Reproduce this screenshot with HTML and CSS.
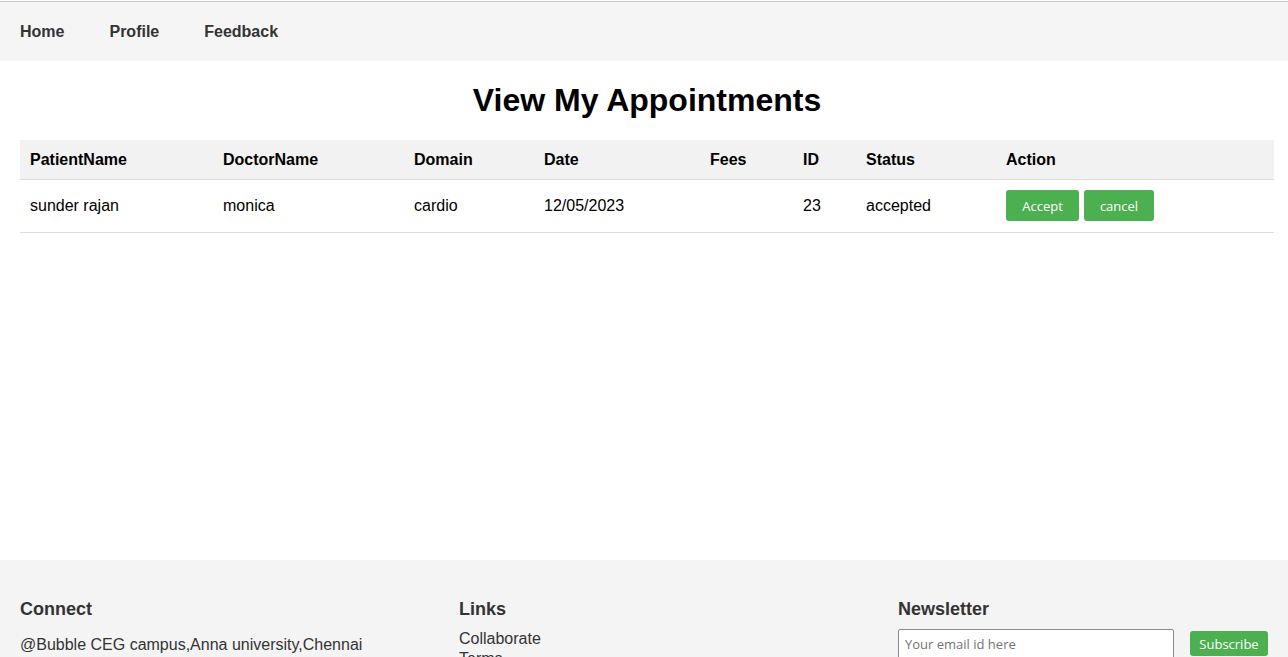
FILE: index.html
```html
<!DOCTYPE html>
<html>
<head>
<meta charset="utf-8">
<link rel="stylesheet" href="styles.css">
</head>
<body>
<div class="topline"></div>
<nav class="nav">
  <a class="nav-link" href="#">Home</a>
  <a class="nav-link" href="#">Profile</a>
  <a class="nav-link" href="#">Feedback</a>
</nav>
<main class="main">
  <h1 class="title">View My Appointments</h1>
  <table class="appt">
    <colgroup>
      <col style="width:193px"><col style="width:191px"><col style="width:130px"><col style="width:166px"><col style="width:93px"><col style="width:63px"><col style="width:140px"><col>
    </colgroup>
    <thead>
      <tr><th>PatientName</th><th>DoctorName</th><th>Domain</th><th>Date</th><th>Fees</th><th>ID</th><th>Status</th><th>Action</th></tr>
    </thead>
    <tbody>
      <tr><td>sunder rajan</td><td>monica</td><td>cardio</td><td>12/05/2023</td><td></td><td>23</td><td>accepted</td>
        <td><div class="actions"><button class="btn btn-accept">Accept</button><button class="btn btn-cancel">cancel</button></div></td></tr>
    </tbody>
  </table>
</main>
<footer class="footer">
  <div class="fcol">
    <h3 class="fhead">Connect</h3>
    <p class="ftext">@Bubble CEG campus,Anna university,Chennai</p>
  </div>
  <div class="fcol">
    <h3 class="fhead">Links</h3>
    <ul class="flinks"><li>Collaborate</li><li>Terms</li></ul>
  </div>
  <div class="fcol">
    <h3 class="fhead">Newsletter</h3>
    <form class="news">
      <input class="email" type="text" placeholder="Your email id here">
      <button class="btn btn-sub" type="button">Subscribe</button>
    </form>
  </div>
</footer>
</body>
</html>
```
FILE: styles.css
```css
html, body { margin: 0; padding: 0; }
body {
  font-family: "Liberation Sans", Arial, sans-serif;
  font-size: 16px;
  color: #000;
  background: #fff;
  overflow: hidden;
}
.topline { height: 1px; background: #fff; border-bottom: 1px solid #c8c8c8; }
.nav {
  height: 59px;
  background: #f5f5f5;
  display: flex;
  align-items: center;
  gap: 45px;
  padding: 0 20px;
}
.nav-link {
  color: #333;
  font-weight: bold;
  font-size: 16px;
  text-decoration: none;
}
.main {
  height: 499px;
  padding: 0 14px 0 20px;
}
.title {
  margin: 0;
  padding-top: 21px;
  height: 58px;
  text-align: center;
  font-size: 32px;
  font-weight: bold;
  line-height: 37px;
}
.appt {
  width: 1254px;
  border-collapse: collapse;
  table-layout: fixed;
}
.appt th {
  background: #f2f2f2;
  text-align: left;
  font-weight: bold;
  height: 39px;
  padding: 2px 10px 0 10px;
  border-bottom: 1px solid #ddd;
  box-sizing: border-box;
}
.appt td {
  height: 52px;
  padding: 0 10px;
  border-bottom: 1px solid #ddd;
  vertical-align: middle;
}
.actions { display: flex; gap: 5px; }
.btn {
  background: #4caf50;
  color: #fff;
  border: none;
  border-radius: 3px;
  font-family: "Open Sans", "Noto Sans", sans-serif;
  font-size: 13px;
  cursor: pointer;
}
.btn-accept { width: 73px; height: 31px; }
.btn-cancel { width: 70px; height: 31px; }
.footer {
  background: #f4f4f4;
  height: 97px;
  padding: 38px 20px 0 20px;
  display: grid;
  grid-template-columns: 439px 439px 1fr;
  box-sizing: border-box;
}
.fhead {
  margin: 0;
  font-size: 18px;
  line-height: 22px;
  color: #333;
  font-weight: bold;
}
.ftext {
  margin: 15px 0 0 0;
  color: #333;
  font-size: 16px;
  line-height: 20px;
}
.flinks {
  list-style: none;
  margin: 9px 0 0 0;
  padding: 0;
  color: #333;
  line-height: 20px;
}
.news { display: flex; align-items: flex-start; gap: 16px; margin-top: 9px; }
.email {
  width: 276px;
  height: 30px;
  box-sizing: border-box;
  border: 1px solid #8a8a98;
  border-radius: 2px;
  padding: 0 6px;
  font-family: "Open Sans", "Noto Sans", sans-serif;
  font-size: 13px;
  background: #fff;
}
.email::placeholder { color: #757575; }
.btn-sub { width: 78px; height: 25px; margin-top: 2px; }
```
